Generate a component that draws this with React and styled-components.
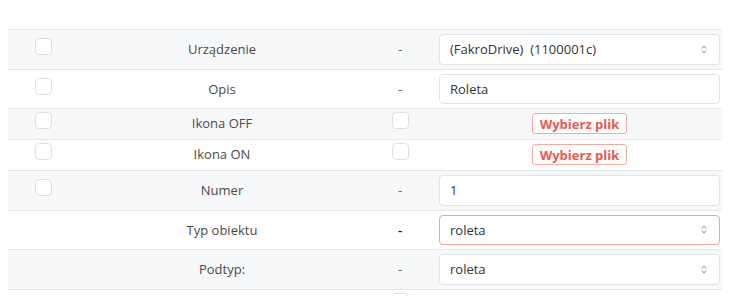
import styled, { createGlobalStyle } from 'styled-components';

const GlobalStyle = createGlobalStyle`
    body {
        margin: 0;
        background: #ffffff;
        font-family: "Open Sans", "DejaVu Sans", sans-serif;
        color: #444;
    }
`;

const rows = [
    { label: 'Urządzenie', check: true, kind: 'select', value: '(FakroDrive)  (1100001c)' },
    { label: 'Opis', check: true, kind: 'input', value: 'Roleta' },
    { label: 'Ikona OFF', check: true, kind: 'file' },
    { label: 'Ikona ON', check: true, kind: 'file' },
    { label: 'Numer', check: true, kind: 'input', value: '1' },
    { label: 'Typ obiektu', check: false, kind: 'select', value: 'roleta', invalid: true, strong: true },
    { label: 'Podtyp:', check: false, kind: 'select', value: 'roleta' },
    { label: '', check: false, kind: 'file-partial' }
];

function Chevrons() {
    return (
        <svg width="6" height="9" viewBox="0 0 6 9" fill="none" stroke="#8a8f96" strokeWidth="1" strokeLinecap="round" strokeLinejoin="round">
            <path d="M1 3.2 L3 1 L5 3.2" />
            <path d="M1 5.8 L3 8 L5 5.8" />
        </svg>
    );
}

export default function App() {
    return (
        <Page>
            <GlobalStyle />
            <Table>
                {rows.map((row, i) => {
                    const compact = row.kind !== 'select' && row.kind !== 'input';
                    return (
                        <Row key={i} $odd={i % 2 === 0} $compact={compact}>
                            <Cell $top={compact ? '0px' : '4px'}>{row.check && <Box />}</Cell>
                            <Label>{row.label}</Label>
                            <Mid>
                                {row.kind.startsWith('file') ? <Box /> : <Dash $strong={row.strong}>-</Dash>}
                            </Mid>
                            <Field>
                                {row.kind === 'select' && (
                                    <Control $invalid={row.invalid}>
                                        <span>{row.value}</span>
                                        <Chevrons />
                                    </Control>
                                )}
                                {row.kind === 'input' && (
                                    <Control><span>{row.value}</span></Control>
                                )}
                                {row.kind === 'file' && <FileButton>Wybierz plik</FileButton>}
                            </Field>
                        </Row>
                    );
                })}
            </Table>
        </Page>
    );
}

const Page = styled.div`
    width: 730px;
    height: 296px;
    overflow: hidden;
    padding-top: 29px;
    box-sizing: border-box;
`;

const Table = styled.div`
    margin-left: 8px;
    width: 714px;
    display: flex;
    flex-direction: column;
`;

const Row = styled.div`
    display: grid;
    grid-template-columns: 71px 286px 70px 1fr;
    border-top: 1px solid #e4e7eb;
    background-color: ${p => p.$odd ? '#f7f8fa' : '#ffffff'};
    padding: ${p => p.$compact ? '3px 0 5px' : '4px 0 4px'};
    min-height: ${p => p.$compact ? '22px' : '30.5px'};
    align-items: start;
`;

const Cell = styled.div`
    display: flex;
    justify-content: center;
    padding-top: ${p => p.$top};
`;

const Box = styled.div`
    width: 17px;
    height: 17px;
    box-sizing: border-box;
    border: 1px solid #dcdfe4;
    border-radius: 4px;
    background: #ffffff;
`;

const Label = styled.div`
    text-align: center;
    font-size: 13px;
    color: #4a4a4a;
    align-self: center;
`;

const Mid = styled.div`
    display: flex;
    justify-content: center;
    align-self: center;
    ${Box} {
        margin-top: -5px;
    }
`;

const Dash = styled.span`
    font-size: 13px;
    color: ${p => p.$strong ? '#111' : '#666'};
    font-weight: ${p => p.$strong ? 600 : 400};
`;

const Field = styled.div`
    display: flex;
    justify-content: center;
    padding: 0 2px 0 4px;
`;

const Control = styled.div`
    flex: 1;
    height: 30.5px;
    box-sizing: border-box;
    display: flex;
    align-items: center;
    justify-content: space-between;
    padding: 0 12px 0 10px;
    background: #ffffff;
    border: 1px solid ${p => p.$invalid ? '#f3a39c' : '#e0e3e8'};
    border-radius: 4px;
    font-size: 13px;
    color: #333;
    span {
        white-space: pre;
    }
`;

const FileButton = styled.div`
    margin-top: 1px;
    height: 21px;
    box-sizing: border-box;
    padding: 0 7px;
    display: flex;
    align-items: center;
    border: 1px solid #f6aaa3;
    border-radius: 3px;
    background: #ffffff;
    color: #f0564c;
    font-weight: 700;
    font-size: 13px;
`;
